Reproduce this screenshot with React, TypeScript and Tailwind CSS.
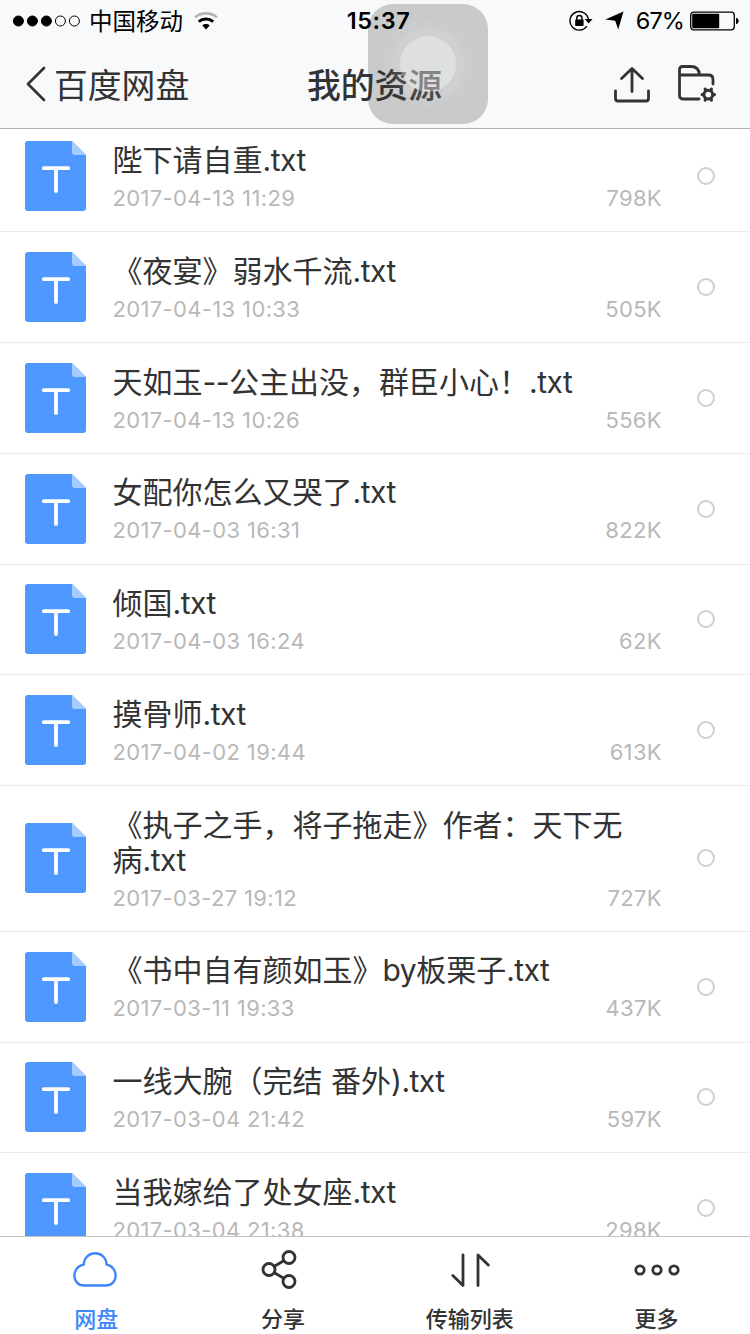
import { useState } from "react";
import clsx from "clsx";

type FileItem = {
  name: string;
  date: string;
  size: string;
};

const files: FileItem[] = [
  { name: "陛下请自重.txt", date: "2017-04-13 11:29", size: "798K" },
  { name: "《夜宴》弱水千流.txt", date: "2017-04-13 10:33", size: "505K" },
  { name: "天如玉--公主出没，群臣小心！.txt", date: "2017-04-13 10:26", size: "556K" },
  { name: "女配你怎么又哭了.txt", date: "2017-04-03 16:31", size: "822K" },
  { name: "倾国.txt", date: "2017-04-03 16:24", size: "62K" },
  { name: "摸骨师.txt", date: "2017-04-02 19:44", size: "613K" },
  { name: "《执子之手，将子拖走》作者：天下无病.txt", date: "2017-03-27 19:12", size: "727K" },
  { name: "《书中自有颜如玉》by板栗子.txt", date: "2017-03-11 19:33", size: "437K" },
  { name: "一线大腕（完结 番外).txt", date: "2017-03-04 21:42", size: "597K" },
  { name: "当我嫁给了处女座.txt", date: "2017-03-04 21:38", size: "298K" },
];

function StatusBar() {
  return (
    <div className="flex h-10 items-center text-black">
      <div className="flex flex-1 items-center pl-3">
        <svg className="mt-px" width="69" height="14" viewBox="0 0 69 14" stroke="currentColor">
          <circle cx="6.4" cy="7" r="5" fill="currentColor" />
          <circle cx="20.4" cy="7" r="5" fill="currentColor" />
          <circle cx="34.4" cy="7" r="5" fill="currentColor" />
          <circle cx="48.4" cy="7" r="5" fill="none" />
          <circle cx="62.4" cy="7" r="5" fill="none" />
        </svg>
        <span className="ml-2 pt-[3px] text-[23.5px] leading-10">中国移动</span>
        <svg className="mt-0.5 ml-[11px]" width="24" height="19" viewBox="0 0 24 19" fill="none" strokeWidth="2.6">
          <path d="M1 5.4C7 0 17 0 23 5.4" stroke="#b4b5b7" />
          <path d="M4.8 9.7C9 6 15 6 19.2 9.7" stroke="#000" strokeWidth="3" />
          <path d="M8.3 13.5C10.5 11.6 13.5 11.6 15.7 13.5L12 17.5Z" fill="#000" />
        </svg>
      </div>
      <span className="relative z-30 ml-[6px] pt-0.5 text-[23.5px] font-semibold tracking-[0.6px]">15:37</span>
      <div className="flex flex-1 items-center justify-end pr-[11px]">
        <svg className="mt-px" width="24" height="22" viewBox="0 0 24 22" fill="none">
          <path d="M17.9 16.2A9.3 9.3 0 1 1 19.4 9" stroke="#000" strokeWidth="1.4" />
          <path d="M15.8 9H23.5L19.6 13.4Z" fill="#000" />
          <rect x="6.2" y="9.5" width="8.4" height="6.4" rx=".6" fill="#000" />
          <path d="M7.8 10V8a2.6 2.6 0 0 1 5.2 0V10" stroke="#000" strokeWidth="1.5" />
        </svg>
        <svg className="mt-px ml-3" width="19" height="19" viewBox="0 0 19 19" fill="#000">
          <path d="M18.5 .5L13.2 18.5L10.2 9.8L.3 8.4Z" />
        </svg>
        <span className="ml-3 pt-0.5 text-[23.5px] tracking-[-0.9px]">67%</span>
        <svg className="mt-px ml-1.5" width="49" height="20" viewBox="0 0 49 20" fill="none">
          <rect x=".7" y="1.2" width="43.6" height="17.6" rx="3" stroke="#000" strokeWidth="1.3" />
          <rect x="2.2" y="2.8" width="27" height="14.4" rx="1" fill="#000" />
          <path d="M46 6.8c3.6.8 3.6 5.6 0 6.4Z" fill="#000" />
        </svg>
      </div>
    </div>
  );
}

function NavBar() {
  return (
    <div className="flex h-22 items-center text-[#333]">
      <div className="flex flex-1 items-center pl-[26px]">
        <svg width="20" height="36" viewBox="0 0 20 36" fill="none" stroke="currentColor" strokeWidth="2.7" strokeLinecap="round" strokeLinejoin="round">
          <path d="M18 2L2 18L18 34" />
        </svg>
        <span className="ml-2 pt-1 text-[33.8px] leading-none">百度网盘</span>
      </div>
      <h1 className="relative z-10 ml-[6px] pt-1 text-[33.8px] leading-none font-medium">我的资源</h1>
      <div className="flex flex-1 items-center justify-end pr-[33px]">
        <svg width="38" height="38" viewBox="0 0 38 38" fill="none" stroke="currentColor" strokeWidth="2.8" strokeLinecap="round" strokeLinejoin="round">
          <path d="M19 26.5V4M8.5 13.5L19 3.5L29.5 13.5M2.5 26V33.5Q2.5 36 5 36H33Q35.5 36 35.5 33.5V26" />
        </svg>
        <svg className="ml-[26px]" width="40" height="38" viewBox="0 0 40 38" fill="none" stroke="currentColor" strokeWidth="2.8" strokeLinecap="round" strokeLinejoin="round">
          <path d="M22 34H6Q2.5 34 2.5 30.5V4.5Q2.5 1.5 5.5 1.5H14Q22 1.5 22.5 10H31.5Q36 10 36 14.5V19M2.5 10H22.5" />
          <circle cx="31.3" cy="29.6" r="4.4" strokeWidth="3" />
          <path d="M28.2 24.2L28.9 25.4M34.4 24.2L33.7 25.4M25.2 29.6H26.4M37.4 29.6H36.2M28.2 35L28.9 33.8M34.4 35L33.7 33.8" strokeWidth="3.2" />
        </svg>
      </div>
    </div>
  );
}

function AssistiveTouch() {
  return (
    <>
      <div className="absolute top-1 left-92 size-30 rounded-[25px] bg-[#c9cacb]" />
      <div className="absolute top-1 left-92 z-20 grid size-30 place-items-center">
        <div className="grid size-[88px] place-items-center rounded-full bg-white/4">
          <div className="grid size-[73px] place-items-center rounded-full bg-white/8">
            <div className="size-14 rounded-full bg-white/32" />
          </div>
        </div>
      </div>
    </>
  );
}

function TextFileIcon() {
  return (
    <svg width="61" height="70" viewBox="0 0 61 70" fill="none">
      <path d="M3 0H47L61 14V67Q61 70 58 70H3Q0 70 0 67V3Q0 0 3 0Z" fill="#4f98ff" />
      <path d="M47 0L61 14H50Q47 14 47 11Z" fill="#a6ccff" />
      <path d="M18.8 27.2H43.2M31 27.2V50" stroke="#fff" strokeWidth="3.8" strokeLinecap="round" />
    </svg>
  );
}

// latin runs sit a little tighter than the chinese text around them
function FileName({ name }: { name: string }) {
  return name.split(/([!-~]+)/).map((part, i) =>
    i % 2 ? (
      <span key={i} className="tracking-[-0.5px]">
        {part}
      </span>
    ) : (
      part
    ),
  );
}

function FileRow({ file, checked, onToggle }: { file: FileItem; checked: boolean; onToggle: () => void }) {
  return (
    <li className="flex items-center border-b border-[#ececec] pl-[25px]">
      <TextFileIcon />
      <div className="ml-[26.5px] w-[549.5px] pt-[21.5px] pb-[19.25px]">
        <p className="pr-6 text-[30px] leading-[35px] text-[#333]">
          <FileName name={file.name} />
        </p>
        <div className="mt-1.5 flex justify-between text-[22px] leading-7 tracking-[0.35px] text-[#b8b8b8]">
          <span>{file.date}</span>
          <span>{file.size}</span>
        </div>
      </div>
      <button
        type="button"
        onClick={onToggle}
        className={clsx("ml-[35px] size-[18px] rounded-full border-2", checked ? "border-[#4f98ff] bg-[#4f98ff]" : "border-[#cfcfcf]")}
      />
    </li>
  );
}

const tabs = [
  {
    label: "网盘",
    icon: <path d="M12.5 36.5C-.8 36.5-.8 18 11.8 15.5C12.3 .5 34 .5 34.5 15.5C46.8 18 46.8 36.5 33.5 36.5Z" strokeWidth="2.4" />,
  },
  {
    label: "分享",
    icon: (
      <>
        <circle cx="10" cy="20.5" r="6" />
        <circle cx="30" cy="8.5" r="6" />
        <circle cx="30" cy="32.5" r="6" />
        <path d="M15.4 17.3L24.7 11.7M15.4 23.8L24.7 29.3" />
      </>
    ),
  },
  {
    label: "传输列表",
    icon: <path d="M17 6V36.5L6.8 26.5M32 36.5V6L42.3 16" />,
  },
  {
    label: "更多",
    icon: (
      <>
        <circle cx="7" cy="21" r="4.2" />
        <circle cx="24" cy="21" r="4.2" />
        <circle cx="41" cy="21" r="4.2" />
      </>
    ),
  },
];

export default function App() {
  const [selected, setSelected] = useState<string[]>([]);

  const toggle = (name: string) => {
    setSelected((prev) => (prev.includes(name) ? prev.filter((n) => n !== name) : [...prev, name]));
  };

  return (
    <div className="relative flex h-[1334px] w-[750px] flex-col overflow-hidden bg-white font-[Inter,'Noto_Sans_CJK_SC',sans-serif]">
      <header className="h-[129px] shrink-0 border-b border-[#b2b2b4] bg-[#f8f9fb]">
        <StatusBar />
        <NavBar />
      </header>
      <AssistiveTouch />

      <main className="min-h-0 flex-1 overflow-hidden">
        <ul className="-mt-[7.5px]">
          {files.map((file) => (
            <FileRow key={file.name} file={file} checked={selected.includes(file.name)} onToggle={() => toggle(file.name)} />
          ))}
        </ul>
      </main>

      <nav className="grid h-[98px] shrink-0 grid-cols-4 border-t border-[#c4c4c4] bg-white pl-[3px]">
        {tabs.map((tab, i) => (
          <button
            key={tab.label}
            type="button"
            className={clsx("flex flex-col items-center pt-3", i === 0 ? "text-[#3d87fa]" : "text-[#333]")}
          >
            <svg width="48" height="42" viewBox="0 0 48 42" fill="none" stroke="currentColor" strokeWidth="2.8" strokeLinecap="round" strokeLinejoin="round">
              {tab.icon}
            </svg>
            <span className="mt-[15px] text-[22px] leading-[26px] font-medium">{tab.label}</span>
          </button>
        ))}
      </nav>
    </div>
  );
}
